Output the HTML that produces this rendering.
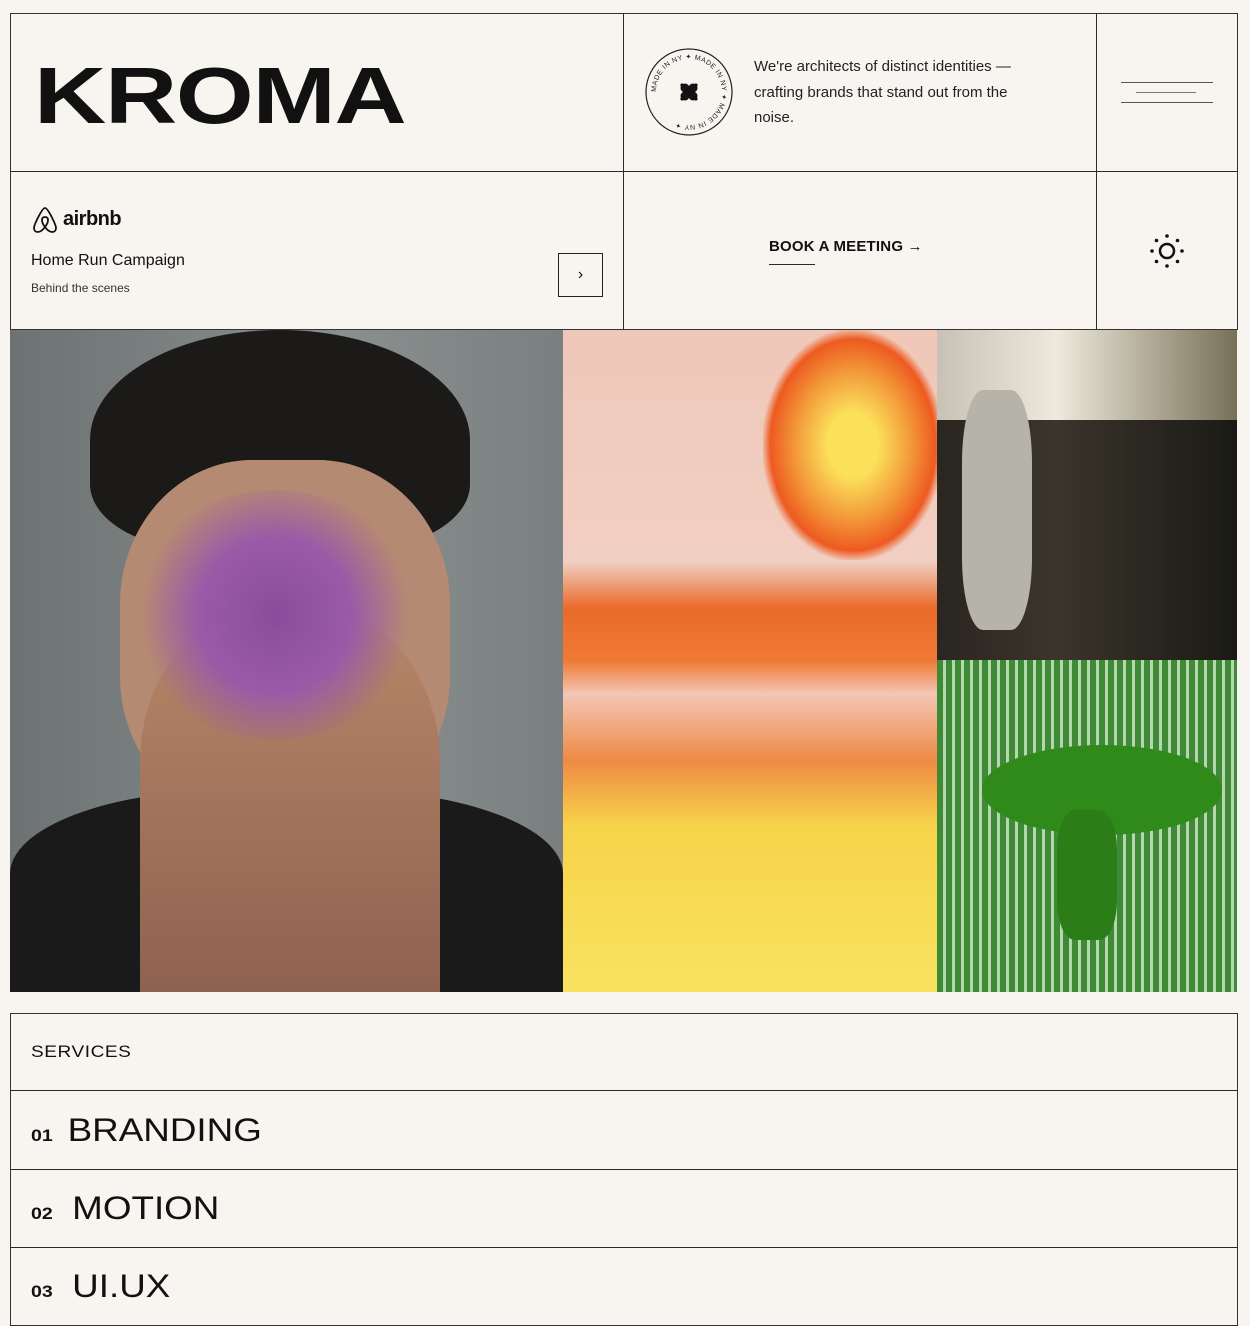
<!DOCTYPE html>
<html><head><meta charset="utf-8"><style>
*{box-sizing:border-box;margin:0;padding:0}
body{width:1250px;height:1326px;background:#f8f5f0;font-family:"Liberation Sans",sans-serif;color:#111;position:relative;overflow:hidden}
.a{position:absolute}
.ln{position:absolute;background:#2a2a2a}
</style></head><body>
<div class="a" style="left:10px;top:13px;width:1228px;height:317px;border:1px solid #333"></div>
<div class="ln" style="left:10px;top:171px;width:1228px;height:1px"></div>
<div class="ln" style="left:623px;top:13px;width:1px;height:317px"></div>
<div class="ln" style="left:1096px;top:13px;width:1px;height:317px"></div>
<div class="a" style="left:34px;top:46px;font-size:80px;font-weight:900;letter-spacing:-1px;line-height:100px;transform:scaleX(1.25);transform-origin:left">KROMA</div>
<svg class="a" style="left:643px;top:46px" width="92" height="92" viewBox="0 0 92 92">
<circle cx="46" cy="46" r="43" fill="none" stroke="#222" stroke-width="1.2"/>
<defs><path id="c" d="M46,46 m-33,0 a33,33 0 1,1 66,0 a33,33 0 1,1 -66,0"/></defs>
<text font-size="7" fill="#222" font-family="Liberation Sans" letter-spacing="0.5"><textPath href="#c">MADE IN NY ✦ MADE IN NY ✦ MADE IN NY ✦</textPath></text>
<g stroke="#111" stroke-width="3" fill="none"><path d="M38,38 L54,54 M54,38 L38,54"/><circle cx="42" cy="42" r="3"/><circle cx="50" cy="42" r="3"/><circle cx="42" cy="50" r="3"/><circle cx="50" cy="50" r="3"/></g>
</svg>
<div class="a" style="left:754px;top:54px;font-size:15px;line-height:25.5px;color:#222;width:290px">We're architects of distinct identities — crafting brands that stand out from the noise.</div>
<div class="ln" style="left:1121px;top:82px;width:92px;height:1px;background:#555"></div>
<div class="ln" style="left:1136px;top:92px;width:60px;height:1px;background:#777"></div>
<div class="ln" style="left:1121px;top:102px;width:92px;height:1px;background:#555"></div>
<svg class="a" style="left:31px;top:205px" width="28" height="30" viewBox="0 0 28 30"><path d="M14,3 C11,3 3,20 3,23 C3,28 9,29 14,22 C19,29 25,28 25,23 C25,20 17,3 14,3 Z M14,22 C10,17 10,12 14,12 C18,12 18,17 14,22Z" fill="none" stroke="#111" stroke-width="1.8"/></svg>
<div class="a" style="left:63px;top:208px;font-size:20px;font-weight:bold;letter-spacing:-0.5px">airbnb</div>
<div class="a" style="left:31px;top:252px;font-size:16px">Home Run Campaign</div>
<div class="a" style="left:31px;top:281px;font-size:12px;color:#333">Behind the scenes</div>
<div class="a" style="left:558px;top:253px;width:45px;height:44px;border:1px solid #222;text-align:center;line-height:42px;font-size:16px">›</div>
<div class="a" style="left:769px;top:238px;font-size:15px;font-weight:bold;letter-spacing:0.2px">BOOK A MEETING →</div>
<div class="ln" style="left:769px;top:264px;width:46px;height:1px"></div>
<svg class="a" style="left:1148px;top:232px" width="38" height="38" viewBox="0 0 38 38"><circle cx="19" cy="19" r="7" fill="none" stroke="#111" stroke-width="2.5"/><g fill="#111"><circle cx="19" cy="4" r="1.8"/><circle cx="19" cy="34" r="1.8"/><circle cx="4" cy="19" r="1.8"/><circle cx="34" cy="19" r="1.8"/><circle cx="8.5" cy="8.5" r="1.8"/><circle cx="29.5" cy="29.5" r="1.8"/><circle cx="29.5" cy="8.5" r="1.8"/><circle cx="8.5" cy="29.5" r="1.8"/></g></svg>
<div class="a" style="left:10px;top:330px;width:553px;height:662px;background:linear-gradient(90deg,#6d7273,#8a8f8e 60%,#7a7f80);overflow:hidden">
<div class="a" style="left:80px;top:0;width:380px;height:220px;border-radius:50% 50% 30% 30%;background:#1b1a19"></div>
<div class="a" style="left:110px;top:130px;width:330px;height:360px;border-radius:40%;background:#b58a72"></div>
<div class="a" style="left:0;top:460px;width:553px;height:210px;background:#1a1a1a;border-radius:40% 40% 0 0"></div>
<div class="a" style="left:130px;top:280px;width:300px;height:382px;background:linear-gradient(#b88769,#8e6250);border-radius:40% 40% 0 0"></div>
<div class="a" style="left:120px;top:160px;width:290px;height:250px;border-radius:50%;background:radial-gradient(circle,#8a4c9a 0,#9a5aa8 40%,rgba(150,90,160,0) 70%)"></div>
</div>
<div class="a" style="left:563px;top:330px;width:374px;height:662px;overflow:hidden;background:linear-gradient(180deg,#f0c7b9 0,#f1cfc2 35%,#ea6a2a 42%,#ef7a35 50%,#f3c6b6 55%,#ee8a45 65%,#f7d44a 75%,#f9e260 100%)">
<div class="a" style="left:200px;top:0;width:180px;height:230px;border-radius:40%;background:radial-gradient(#fbe05a 20%,#f39a3a 45%,#ed5a20 65%,rgba(240,180,160,0) 72%)"></div>
</div>
<div class="a" style="left:937px;top:330px;width:300px;height:330px;background:linear-gradient(90deg,#2a2620 0,#3a352c 40%,#1a1a14 100%);overflow:hidden">
<div class="a" style="left:0;top:0;width:300px;height:90px;background:linear-gradient(90deg,#c7c2b5,#eee9dc 40%,#777058 100%)"></div>
<div class="a" style="left:25px;top:60px;width:70px;height:240px;background:#b6b3a8;border-radius:30%"></div>
</div>
<div class="a" style="left:937px;top:660px;width:300px;height:332px;background:repeating-linear-gradient(90deg,#3f8a36 0 6px,#b6d6ae 6px 9px),#3b8a34;overflow:hidden">
<div class="a" style="left:45px;top:85px;width:240px;height:90px;border-radius:50%;background:#2f8a1a"></div>
<div class="a" style="left:120px;top:150px;width:60px;height:130px;background:#2b7d18;border-radius:30%"></div>
</div>
<div class="a" style="left:10px;top:1013px;width:1228px;height:313px;border:1px solid #333"></div>
<div class="ln" style="left:10px;top:1090px;width:1228px;height:1px"></div>
<div class="ln" style="left:10px;top:1169px;width:1228px;height:1px"></div>
<div class="ln" style="left:10px;top:1247px;width:1228px;height:1px"></div>
<div class="a" style="left:31px;top:1042px;font-size:17px;letter-spacing:0.5px;transform:scaleX(1.12);transform-origin:left">SERVICES</div>
<div class="a" style="left:31px;top:1112px;font-size:32px;transform:scaleX(1.15);transform-origin:left"><span style="font-size:17px;font-weight:bold;margin-right:4px">01</span> BRANDING</div>
<div class="a" style="left:31px;top:1190px;font-size:32px;transform:scaleX(1.15);transform-origin:left"><span style="font-size:17px;font-weight:bold;margin-right:8px">02</span> MOTION</div>
<div class="a" style="left:31px;top:1268px;font-size:32px;transform:scaleX(1.15);transform-origin:left"><span style="font-size:17px;font-weight:bold;margin-right:8px">03</span> UI.UX</div>
</body></html>
